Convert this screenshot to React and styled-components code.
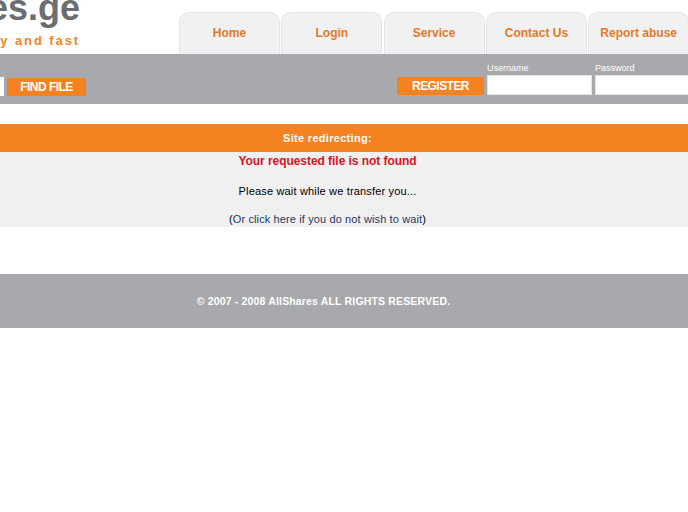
import React from "react";
import styled, { createGlobalStyle } from "styled-components";

const Global = createGlobalStyle`
  html, body { margin: 0; padding: 0; background: #fff; overflow: hidden; }
  body { font-family: "Liberation Sans", Arial, sans-serif; font-size: 11px; }
`;
const Page = styled.div`width: 688px; height: 512px; overflow: hidden;`;
const Header = styled.header`display: flex; height: 54px; align-items: flex-start;`;
const Logo = styled.div`
  width: 80px; height: 54px; flex: none; overflow: hidden;
  display: flex; flex-direction: column; align-items: flex-end;
`;
const LogoName = styled.div`
  font-size: 36px; line-height: 36px; font-weight: 700; color: #6b6d70; white-space: nowrap;
  margin-top: -10px; margin-right: 0;
`;
const Tagline = styled.div`
  font-size: 13px; line-height: 15px; font-weight: 700; color: #f7841f; white-space: nowrap;
  letter-spacing: 1.9px; margin-top: 7px; margin-right: 0;
`;
const Tabs = styled.nav`display: flex; gap: 1.3px; margin: 12px 0 0 99px; flex: none;`;
const Tab = styled.a`
  box-sizing: border-box; width: 101px; height: 42px; flex: none;
  background: #f0f1f3; border: 1px solid #e4e5e7; border-bottom: 0; border-radius: 10px 10px 0 0;
  display: flex; justify-content: center; padding-top: 13px;
  font-size: 12px; line-height: 14px; font-weight: 700; color: #e57a25;
`;
const Toolbar = styled.div`
  height: 50px; background: #a7a9ac; display: flex; align-items: flex-start;
`;
const SearchInput = styled.div`width: 4px; height: 19px; margin-top: 23px; background: #fff; flex: none;`;
const Button = styled.div`
  box-sizing: border-box; height: 18px; background: #f58220; color: #fff; font-weight: 700;
  font-size: 12px; line-height: 18px; text-align: center; flex: none; letter-spacing: -0.55px;
  width: ${p => p.$w}px; margin: ${p => p.$m};
`;
const Field = styled.label`
  display: flex; flex-direction: column; flex: none; width: ${p => p.$w}px; margin-left: ${p => p.$ml}px;
  color: #fff; font-size: 9px; line-height: 10px; padding-top: 9px;
`;
const FieldInput = styled.div`
  box-sizing: border-box; height: 20px; margin-top: 2px; background: #fff; border: 1px solid #dfe6ee;
`;
const Message = styled.section`margin-top: 20px;`;
const Title = styled.div`
  height: 28px; background: #f58220; color: #fff; font-weight: 700; font-size: 11px;
  line-height: 29px; text-align: center; padding-right: 33px; letter-spacing: 0.3px;
`;
const Panel = styled.div`
  height: 75px; background: #f0f0f0; text-align: center; font-size: 11px; color: #000;
  padding-right: 33px;
`;
const Error = styled.div`color: #dd1122; font-weight: 700; font-size: 12px; line-height: 14px; padding-top: 2px; letter-spacing: -0.05px;`;
const Wait = styled.div`line-height: 14px; margin-top: 16px; letter-spacing: 0.17px;`;
const Skip = styled.div`line-height: 14px; margin-top: 14px; letter-spacing: 0.12px; a { color: #1f3a5f; text-decoration: none; }`;
const Footer = styled.footer`
  margin-top: 47px; height: 54px; background: #a7a9ac; color: #fff; font-weight: 700; font-size: 10.5px;
  line-height: 54px; text-align: center; letter-spacing: 0.16px;
  span { display: inline-block; margin-right: 41px; }
`;

export default function App() {
  return (
    <Page>
      <Global />
      <Header>
        <Logo>
          <LogoName>allshares.ge</LogoName>
          <Tagline>easy and fast</Tagline>
        </Logo>
        <Tabs>
          {["Home", "Login", "Service", "Contact Us", "Report abuse"].map(t => <Tab key={t}>{t}</Tab>)}
        </Tabs>
      </Header>
      <Toolbar>
        <SearchInput />
        <Button $w={79} $m="24px 0 0 3px">FIND FILE</Button>
        <Button $w={87} $m="23px 0 0 311px">REGISTER</Button>
        <Field $w={105} $ml={3}>Username<FieldInput /></Field>
        <Field $w={110} $ml={3}>Password<FieldInput /></Field>
      </Toolbar>
      <Message>
        <Title>Site redirecting:</Title>
        <Panel>
          <Error>Your requested file is not found</Error>
          <Wait>Please wait while we transfer you...</Wait>
          <Skip>(<a>Or click here if you do not wish to wait</a>)</Skip>
        </Panel>
      </Message>
      <Footer><span>© 2007 - 2008 AllShares ALL RIGHTS RESERVED.</span></Footer>
    </Page>
  );
}
